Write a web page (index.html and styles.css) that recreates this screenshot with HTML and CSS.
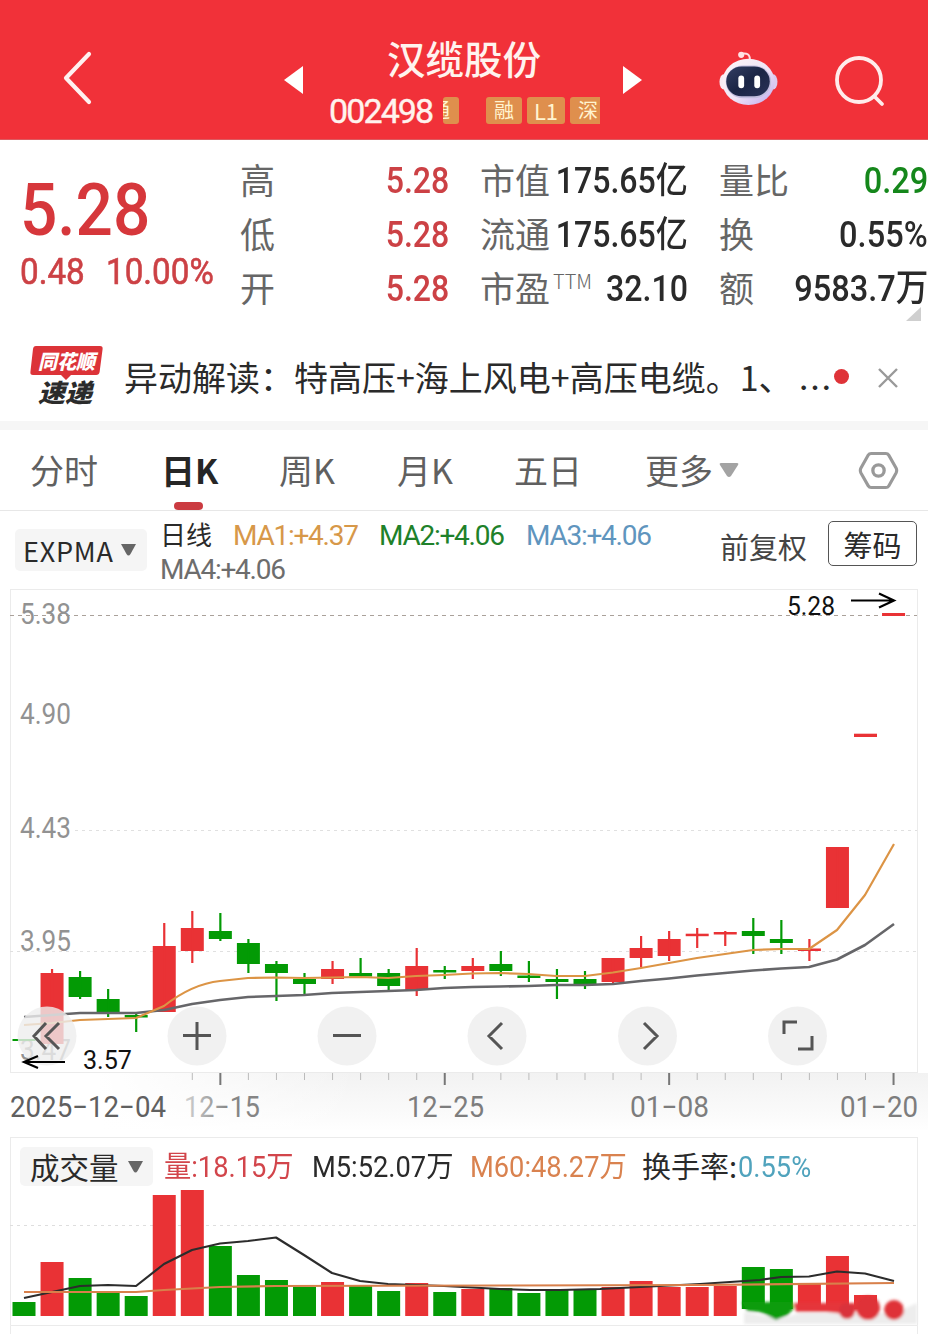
FILE: index.html
```html
<!DOCTYPE html>
<html lang="zh-CN">
<head>
<meta charset="utf-8">
<title>汉缆股份 002498</title>
<link rel="stylesheet" href="styles.css">
</head>
<body>
<div class="app">
  <header class="header">
    <svg class="back" viewBox="0 0 40 60" width="40" height="60"><path d="M29 6 6 30l23 24" fill="none" stroke="#fff1f0" stroke-width="4.2" stroke-linecap="round" stroke-linejoin="round"/></svg>
    <svg class="prev" viewBox="0 0 20 30" width="20" height="30"><path d="M19 1v28L0 15z" fill="#fff"/></svg>
    <div class="title">
      <h1>汉缆股份</h1>
      <div class="code-row">
        <span class="code num">002498</span>
        <span class="badge cut-left">通</span>
        <span class="badge rong">融</span>
        <span class="badge level">L1</span>
        <span class="badge shen">深</span>
      </div>
    </div>
    <svg class="next" viewBox="0 0 20 30" width="20" height="30"><path d="M1 1v28l19-14z" fill="#fff"/></svg>
    <svg class="robot" viewBox="0 0 64 60" width="62" height="58">
      <defs>
        <linearGradient id="shell" x1="0" y1="0" x2="1" y2="1"><stop offset="0" stop-color="#fff6f8"/><stop offset=".55" stop-color="#efe4f6"/><stop offset="1" stop-color="#bfa8ee"/></linearGradient>
        <linearGradient id="visor" x1="0" y1="0" x2="1" y2="1"><stop offset="0" stop-color="#333e63"/><stop offset=".5" stop-color="#1b2545"/><stop offset="1" stop-color="#2a3258"/></linearGradient>
      </defs>
      <path d="M25 5q9-2 9 6" fill="none" stroke="#ffdfe2" stroke-width="2"/>
      <circle cx="25" cy="6" r="3.2" fill="#ffe3e5"/>
      <ellipse cx="7" cy="34" rx="4.5" ry="8" fill="#f7e9f4"/><ellipse cx="58" cy="34" rx="4.5" ry="8" fill="#dccbef"/>
      <ellipse cx="32.5" cy="34" rx="27" ry="24" fill="url(#shell)"/>
      <rect x="9" y="17" width="47" height="34" rx="18" fill="#c3bedf"/>
      <rect x="9.500" y="18" width="45" height="31" rx="16" fill="url(#visor)"/>
      <rect x="22" y="27.500" width="6" height="13" rx="3" fill="#fff"/><rect x="38.500" y="27.500" width="6" height="13" rx="3" fill="#fff"/>
    </svg>
    <svg class="search" viewBox="0 0 52 54" width="52" height="54"><circle cx="25" cy="26" r="22" fill="none" stroke="#ffeceb" stroke-width="3.800"/><path d="m40.500 42.500 7.500 7.500" stroke="#ffeceb" stroke-width="3.800" stroke-linecap="round"/></svg>
  </header>

  <section class="quote">
    <div class="price">
      <div class="last num">5.28</div>
      <div class="change"><span class="num">0.48</span><span class="num">10.00%</span></div>
    </div>
    <dl class="col range">
      <div><dt>高</dt><dd class="num up">5.28</dd></div>
      <div><dt>低</dt><dd class="num up">5.28</dd></div>
      <div><dt>开</dt><dd class="num up">5.28</dd></div>
    </dl>
    <dl class="col cap">
      <div><dt>市值</dt><dd class="num">175.65亿</dd></div>
      <div><dt>流通</dt><dd class="num">175.65亿</dd></div>
      <div><dt>市盈<sup>TTM</sup></dt><dd class="num">32.10</dd></div>
    </dl>
    <dl class="col flow">
      <div><dt>量比</dt><dd class="num down">0.29</dd></div>
      <div><dt>换</dt><dd class="num">0.55%</dd></div>
      <div><dt>额</dt><dd class="num">9583.7万</dd></div>
    </dl>
    <i class="corner"></i>
  </section>

  <section class="news">
    <svg class="logo" viewBox="0 0 76 64" width="76" height="64">
      <path d="M8 3h64q3 0 2.600 3l-3 23q-.5 3-3.500 3H43l-5 5-5-5H5q-3 0-2.600-3L5 6q.4-3 3-3z" fill="#dc3338"/>
      <text x="10" y="25.500" textLength="57" lengthAdjust="spacingAndGlyphs" class="logo-top">同花顺</text>
      <text x="10" y="59" textLength="54" lengthAdjust="spacingAndGlyphs" class="logo-bottom">速递</text>
    </svg>
    <p>异动解读：特高压+海上风电+高压电缆。1、</p>
    <span class="more-dots">…</span>
    <i class="dot"></i>
    <svg class="close" viewBox="0 0 22 22" width="22" height="22"><path d="m2 2 18 18M20 2 2 20" stroke="#999" stroke-width="2.400"/></svg>
  </section>

  <nav class="tabs">
    <span>分时</span><span class="active">日K</span><span>周K</span><span>月K</span><span>五日</span>
    <span class="more">更多<svg viewBox="0 0 20 16" width="20" height="16"><path d="M2 1h16q2 0 1 2l-7 11q-2 2-4 0L1 3q-1-2 1-2z" fill="#a3a3a3"/></svg></span>
    <svg class="settings" viewBox="0 0 42 40" width="41" height="39"><path d="M13.500 2.500h15q2 0 3 1.700l7.500 13.300q1.300 2.500 0 5L31.500 35.800q-1 1.700-3 1.700h-15q-2 0-3-1.700L3 22.500q-1.300-2.500 0-5L10.500 4.200q1-1.700 3-1.700z" fill="none" stroke="#999" stroke-width="3.200"/><circle cx="21" cy="20" r="5.800" fill="none" stroke="#999" stroke-width="3.400"/></svg>
  </nav>

  <section class="indicator">
    <button class="pill expma">EXPMA<svg viewBox="0 0 15 12" width="15" height="12"><path d="M0 0h15L9.500 10q-2 3-4 0z" fill="#666"/></svg></button>
    <div class="ma-list">
      <span class="daily">日线</span><span class="ma orange">MA1:+4.37</span><span class="ma green">MA2:+4.06</span><span class="ma blue">MA3:+4.06</span>
      <span class="ma gray">MA4:+4.06</span>
    </div>
    <span class="adjust">前复权</span>
    <button class="chips">筹码</button>
  </section>

  <svg class="kline" viewBox="0 589 928 542" width="928" height="542">
    <defs><linearGradient id="axisbg" x1="0" y1="0" x2="0" y2="1"><stop offset="0" stop-color="#f2f2f2"/><stop offset="1" stop-color="#fefefe"/></linearGradient>
    <linearGradient id="axisfade" x1="0" x2="1" y1="0" y2="0"><stop offset="0" stop-color="#fff"/><stop offset="1" stop-color="#fff" stop-opacity="0"/></linearGradient>
    <linearGradient id="fade" x1="0" x2="1" y1="0" y2="0"><stop offset="0" stop-color="#d2d2d2"/><stop offset=".6" stop-color="#858585"/></linearGradient></defs>
    <rect x="100" y="1073" width="828" height="57" fill="url(#axisbg)"/>
    <rect x="99" y="1073" width="260" height="58" fill="url(#axisfade)"/>
    <rect x="10.500" y="589.500" width="907" height="483" fill="#fff" stroke="#ebebeb"/>
    <path d="M10 615.500h907" stroke="#aaa19a" stroke-dasharray="4 4"/>
    <path d="M75 830.500h842M10 951.500h907" stroke="#e0e0e0" stroke-dasharray="3 4"/>
    <g class="axis">
      <text x="20" y="624" textLength="51" lengthAdjust="spacingAndGlyphs">5.38</text>
      <text x="20" y="724" textLength="51" lengthAdjust="spacingAndGlyphs">4.90</text>
      <text x="20" y="838" textLength="51" lengthAdjust="spacingAndGlyphs">4.43</text>
      <text x="20" y="951" textLength="51" lengthAdjust="spacingAndGlyphs">3.95</text>
      <text x="20" y="1060" textLength="51" lengthAdjust="spacingAndGlyphs">3.47</text>
    </g>
    <g id="candles"></g>
    <path d="M24 1017 52 1015 80 1013 108 1013 136 1013 164 1010 192 1004 220 1000 248 997 276 996 304 995 332 993 360 992 388 991 416 990 444 988 472 987 500 986.500 528 986 556 985 585 985 613 984 641 981 669 978.500 697 975.500 725 973 753 970.500 781 968.500 809 967 837 959.500 865 945 894 924" class="line slow"/>
    <path d="M24 1025 52 1023 80 1020 108 1019 136 1018 164 1006Q192 984 220 981L248 978 276 977.500 304 978 332 977.500 360 977 388 978 416 976 444 975 472 973.500 500 973 528 974 556 976 585 976 613 972.500 641 968 669 963 697 958 725 954 753 950 781 949 809 949 837 930 865 895 894 844" class="line fast"/>
    <g class="tools">
      <circle cx="47" cy="1036" r="29.500"/><circle cx="197" cy="1036" r="29.500"/><circle cx="347" cy="1036" r="29.500"/><circle cx="497" cy="1036" r="29.500"/><circle cx="647.500" cy="1036" r="29.500"/><circle cx="797.500" cy="1036" r="29.500"/>
      <path d="M46 1023 34 1036l12 13M59 1023 46 1036l13 13M183 1035.500h28M197 1022v28M333 1035.500h28M502 1023l-13 13 13 13M644 1023l13 13-13 13M784 1034v-12h13M798 1049h14v-13"/>
    </g>
    <g class="mark">
      <text x="787" y="615" textLength="48" lengthAdjust="spacingAndGlyphs">5.28</text>
      <path d="M851 600.500h42m-14-7 15 7-15 7"/>
      <text x="83" y="1069" textLength="49" lengthAdjust="spacingAndGlyphs">3.57</text>
      <path d="M65 1062H25m13-6-14 6 14 6"/>
    </g>
    <g id="ticks"></g>
    <g class="dates">
      <text x="10" y="1116.500" textLength="156" lengthAdjust="spacingAndGlyphs" fill="#606060">2025−12−04</text>
      <text x="184" y="1116.500" textLength="76" lengthAdjust="spacingAndGlyphs" fill="url(#fade)">12−15</text>
      <text x="407" y="1116.500" textLength="77" lengthAdjust="spacingAndGlyphs">12−25</text>
      <text x="630" y="1116.500" textLength="79" lengthAdjust="spacingAndGlyphs">01−08</text>
      <text x="840" y="1116.500" textLength="78" lengthAdjust="spacingAndGlyphs">01−20</text>
    </g>
  </svg>

  <section class="volume">
    <div class="legend">
      <button class="pill vol">成交量<svg viewBox="0 0 15 12" width="15" height="12"><path d="M0 0h15L9.500 10q-2 3-4 0z" fill="#666"/></svg></button>
      <span class="num vup">量:18.15万</span><span class="num m5">M5:52.07万</span><span class="num m60">M60:48.27万</span><span class="rate">换手率:</span><span class="num pct">0.55%</span>
    </div>
    <svg class="bars" viewBox="0 1187 928 147" width="928" height="147">
      <defs><filter id="soft" x="-20%" y="-60%" width="140%" height="220%"><feGaussianBlur stdDeviation="1.800"/></filter></defs>
      <path d="M10.500 1187v138.500H917.500V1187M10.500 1334v-8.500M917.500 1334v-8.500" fill="none" stroke="#ebebeb"/>
      <path d="M10 1225.500h907" stroke="#dedede" stroke-dasharray="3 4"/>
      <g id="volumes"></g>
      <path d="M24 1298 52 1292 80 1286 108 1285 136 1286 164 1264 192 1250 220 1243.500 248 1241 276 1237.500 304 1255 332 1273 360 1281 388 1284 416 1285 444 1286 472 1287.500 500 1289 530 1290 560 1290 600 1289 640 1287 700 1284 730 1282 760 1280 781 1277 809 1276.500 837 1271.500 865 1273.500 894 1281" class="line m5line"/>
      <path d="M24 1292H136L164 1290 220 1287 276 1286 500 1285.500 700 1285 894 1283" class="line m60line"/>
      <g filter="url(#soft)">
        <path d="M744 1312 765 1316 780 1319 800 1313H895L917 1303V1324H744z" fill="#ededed"/>
        <path d="M742 1302h50l2 6-6 7-12 5-11-6-6-2-12-1z" fill="#089c08"/>
        <path d="M794 1303h62v7l-10 4-20-2h-30z" fill="#e5353a"/>
        <circle cx="847" cy="1311" r="8" fill="#d9333a"/><circle cx="868" cy="1308" r="12" fill="#df3338"/><circle cx="894" cy="1310" r="10" fill="#df3338"/>
      </g>
    </svg>
  </section>
</div>
<script src="chart.js"></script>
</body>
</html>
```
FILE: styles.css
```css
* { box-sizing: border-box; }
body { margin: 0; background: #fff; }
.app {
  width: 928px; height: 1334px; overflow: hidden; background: #fff;
  font-family: "Noto Sans CJK SC", sans-serif; color: #2a2a2a;
}
h1, p, dl, dd { margin: 0; font-weight: 400; }
button { border: 0; padding: 0; font: inherit; color: inherit; }
svg { display: block; flex: none; }
.num { font-family: Roboto, "Noto Sans CJK SC", sans-serif; font-weight: 500; white-space: nowrap; }

.header {
  height: 140px; background: #f13139; color: #fff3ee; border-bottom: 1px solid #dc5b60;
  display: grid; grid-template-columns: 60px 224px 43px 295px 95px 115px 96px; align-items: start;
}
.back { grid-column: 2; margin-top: 48px; }
.prev { grid-column: 3; margin-top: 65px; }
.title { grid-column: 4; }
.title h1 { font-size: 38.500px; line-height: 40px; margin: 37px 0 0 60px; font-weight: 500; white-space: nowrap; }
.next { margin-top: 65px; }
.robot { margin-top: 49px; }
.search { margin: 54px 0 0 2px; }
.code-row { display: flex; margin-top: 20px; margin-left: 2px; height: 27px; }
.code { width: 102px; margin-right: 12px; font-size: 34px; line-height: 28px; font-weight: 400; letter-spacing: -1.900px; -webkit-text-stroke: .4px; }
.badge { height: 27px; border-radius: 3px; background: #df8f4d; color: #fff4d0; font-size: 20px; line-height: 26px; text-align: center; overflow: hidden; flex: none; }
.cut-left { width: 16px; display: flex; justify-content: flex-end; padding-right: 9px; margin-right: 27px; }
.rong { width: 36px; margin-right: 5px; }
.level { width: 38px; margin-right: 5px; font-size: 22px; }
.shen { width: 30px; border-radius: 3px 0 0 3px; padding-left: 8px; text-align: left; }

.quote { height: 192px; padding-top: 14px; display: grid; grid-template-columns: 240px 209px 239px 240px; position: relative; }
.price { padding-left: 20px; color: #d6373b; }
.last { font-size: 73px; line-height: 74px; margin-top: 19px; transform: scaleX(.9); transform-origin: left; }
.change { display: grid; grid-template-columns: 86px 1fr; font-size: 36.500px; line-height: 36px; margin-top: 7px; color: #cc4145; }
.change .num { transform: scaleX(.91); transform-origin: left; font-weight: 400; -webkit-text-stroke: .6px; }
.col > div { height: 54px; display: flex; justify-content: space-between; align-items: center; line-height: 54px; }
.col dt { font-size: 35px; font-weight: 400; color: #666; white-space: nowrap; position: relative; top: -2px; }
.col dd { font-size: 36.500px; transform: scaleX(.88); transform-origin: right; }
.cap { padding-left: 31px; }
.cap dd { width: 0; display: flex; justify-content: flex-end; }
.flow { padding-left: 31px; }
.flow dd { font-size: 37px; }
.up { color: #cc4145; }
.down { color: #15871b; }
.col sup { position: absolute; left: 73px; top: -6px; font-size: 20px; font-weight: 300; line-height: 54px; color: #666; }
.corner { position: absolute; right: 7px; bottom: 11px; border-left: 15px solid transparent; border-bottom: 14px solid #cfcfcf; }

.news { height: 89px; display: flex; padding: 11px 0 0 28px; }
.logo-top { font-size: 20px; font-weight: 900; font-style: italic; fill: #fff; }
.logo-bottom { font-size: 25px; font-weight: 900; font-style: italic; fill: #2b2b2b; }
.news p { width: 676px; margin-left: 20px; font-size: 34px; line-height: 68px; white-space: nowrap; }
.more-dots { width: 34px; margin-left: -2px; margin-right: 2px; font-size: 34px; line-height: 68px; padding-top: 10px; }
.dot { width: 15px; height: 15px; border-radius: 50%; background: #df3338; margin-top: 26px; }
.close { margin: 24px 0 0 28px; }

.tabs { height: 90px; border-top: 9px solid #f6f6f6; border-bottom: 1px solid #e7e7e7; padding-left: 30px; display: grid; grid-template-columns: 131px 118px 118px 117px 131px 213px 41px; align-items: center; color: #606060; font-size: 34px; line-height: 80px; }
.tabs .active { color: #262626; font-weight: 700; position: relative; }
.active::after { content: ""; position: absolute; left: 13px; bottom: 0; width: 29px; height: 8px; border-radius: 4px; background: #cb3b41; }
.more { display: flex; align-items: center; gap: 6px; }

.indicator { height: 78px; display: flex; }
.pill { background: #f5f5f5; border-radius: 5px; display: flex; align-items: center; white-space: nowrap; }
.expma { width: 132px; height: 42px; margin: 18px 13px 0 15px; padding-left: 8px; font-size: 27px; gap: 7px; letter-spacing: .8px; }
.ma-list { width: 560px; display: grid; grid-template-columns: 73px 146px 147px 1fr; grid-template-rows: 34px 34px; margin-top: 8px; line-height: 34px; }
.daily { font-size: 26px; margin-top: -2px; }
.ma { font-family: Roboto, sans-serif; font-size: 28px; letter-spacing: -1.250px; white-space: nowrap; }
.orange { color: #d79849; } .green { color: #20812a; } .blue { color: #5f95be; } .gray { color: #6d6d6d; }
.adjust { width: 108px; font-size: 29px; line-height: 70px; color: #444; }
.chips { width: 89px; height: 45px; margin-top: 10px; border: 1px solid #555; border-radius: 5px; background: #fff; font-size: 29px; line-height: 42px; }

.kline text { font-family: Roboto, sans-serif; }
.axis text { font-size: 29px; fill: #929292; }
.line { fill: none; stroke-linejoin: round; }
.slow { stroke: #666669; stroke-width: 2.600; }
.fast { stroke: #dc9445; stroke-width: 2.200; }
.mark text { font-size: 26px; fill: #111; }
.mark path { stroke: #000; stroke-width: 2.200; fill: none; }
.tools circle { fill: #eee; fill-opacity: .8; }
.tools path { fill: none; stroke: #555; stroke-width: 3; }
.dates { fill: #7d7d7d; }
.dates text { font-size: 29px; }
.red { fill: #e93235; } .grn { fill: #039a05; }
.m5line { stroke: #2c2c2c; stroke-width: 2.200; }
.m60line { stroke: #d8804b; stroke-width: 2.200; }

.volume { margin-top: 6px; }
.legend { height: 50px; margin: 0 10px; border: 1px solid #ebebeb; border-bottom: 0; display: grid; grid-template-columns: 153px 148px 158px 172px 96px 1fr; font-size: 29px; line-height: 58px; }
.vol { width: 133px; height: 39px; margin: 9px 0 0 9px; padding-left: 10px; gap: 9px; line-height: 37px; font-size: 29.500px; }
.legend .num { font-weight: 400; transform: scaleX(.94); transform-origin: left; }
.legend .vup { color: #d2454b; } .legend .m60 { color: #d9824f; } .legend .pct { color: #50a3bd; }
.rate { white-space: nowrap; line-height: 55px; }
```
FILE: chart.js
```javascript
// colour, body top, body bottom, high, low, volume top
const days = [
  ["grn",1039,1041,1039,1041,1302],["red",973,1044,969,1044,1262],["grn",977,997,971,999,1278],
  ["grn",999,1013,989,1017,1293],["grn",1015,1017.5,1013,1032,1296],["red",946,1012,923,1012,1195],
  ["red",928,951,911,963,1190],["grn",931,939,913,941,1246],["grn",943,964,939,973,1275],
  ["grn",964,973,961,1001,1280],["grn",979,984,973,994,1287],["red",969,979,961,984,1282],
  ["grn",973,976.5,958,978,1285],["grn",973,986,969,991,1291],["red",966,990,948,996,1283],
  ["grn",970,972.5,966,979,1292],["red",966,971,958,979,1289],["grn",964,971,951,976,1288],
  ["grn",975.5,978,961,982,1293],["grn",979,982,969,999,1290],["grn",979,984,971,989,1289],
  ["red",958,982,958,985,1287],["red",948,958,936,967,1281],["red",939,956,931,961,1287],
  ["red",933.7,936.2,928,948,1287],["red",932,934.5,931,946,1286],["grn",931,936,918,954,1267],
  ["grn",939,943,920,954,1269],["red",948.5,951,939,961,1284],["red",847,908,847,908,1256],
  ["red",733.7,737,734,737,1295],["red",613,616,613,616,null]
];
const NS = "http://www.w3.org/2000/svg";
function rect(parent, cls, x, y, w, h) {
  const r = document.createElementNS(NS, "rect");
  Object.entries({ class: cls, x, y, width: w, height: h }).forEach(([k, v]) => r.setAttribute(k, v));
  parent.appendChild(r);
  return r;
}
const candles = document.getElementById("candles");
const volumes = document.getElementById("volumes");
const ticks = document.getElementById("ticks");
days.forEach(([cls, top, bottom, high, low, vol], i) => {
  const cx = 24 + i * 28.05;
  rect(candles, cls, cx - 11.5, top, 23, bottom - top);
  rect(candles, cls, cx - 1.1, high, 2.2, low - high);
  if (vol) rect(volumes, cls, cx - 11.5, vol, 23, (i < 26 ? 1316 : 1309) - vol);
  if (i > 5) {
    const major = i === 7 || i === 15 || i === 23 || i === 31;
    rect(ticks, "", cx - (major ? 1 : .5), 1073, major ? 2 : 1, major ? 12 : 7)
      .setAttribute("fill", major ? "#777" : "#bbb");
  }
});
```
